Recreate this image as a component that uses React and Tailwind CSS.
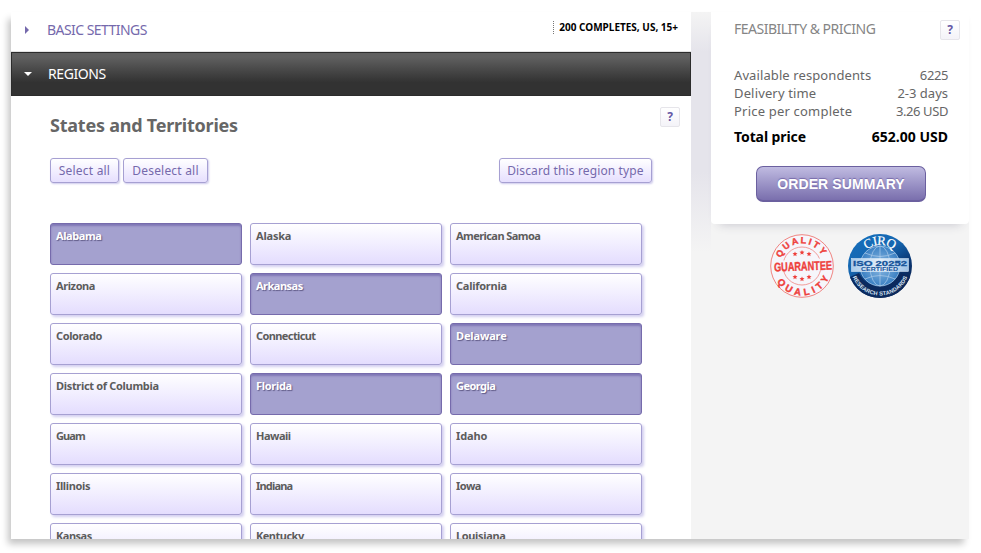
const STATES = [
  ["Alabama", true, "tracking-[-0.4px]"], ["Alaska", false, "tracking-[-0.2px]"], ["American Samoa", false, "tracking-[-0.57px]"],
  ["Arizona", false, "tracking-[-0.4px]"], ["Arkansas", true, "tracking-[-0.5px]"], ["California", false, "tracking-[-0.25px]"],
  ["Colorado", false, "tracking-[-0.4px]"], ["Connecticut", false, "tracking-[-0.6px]"], ["Delaware", true, "tracking-[-0.15px]"],
  ["District of Columbia", false, "tracking-[-0.32px]"], ["Florida", true, "tracking-[-0.3px]"], ["Georgia", true, "tracking-[-0.55px]"],
  ["Guam", false, "tracking-[-0.9px]"], ["Hawaii", false, "tracking-[-0.5px]"], ["Idaho", false, "tracking-[-0.1px]"],
  ["Illinois", false, "tracking-[-0.35px]"], ["Indiana", false, "tracking-[-0.8px]"], ["Iowa", false, "tracking-[-0.5px]"],
  ["Kansas", false, "tracking-[-0.5px]"], ["Kentucky", false, "tracking-[-0.5px]"], ["Louisiana", false, "tracking-[-0.35px]"],
];

function StateTile({ name, selected, tracking }) {
  const look = selected
    ? "border-[#766bac] bg-[#a4a1cf] text-white shadow-[inset_0_2px_2px_#8078b6] [text-shadow:1px_1px_1px_#5f5a86]"
    : "border-[#a6a0d2] bg-gradient-to-b from-white to-[#e4ddfe] text-[#5c5c5c] shadow-[2px_2px_3px_#d2cef0]";
  return (
    <button className={`flex h-[42px] w-[192px] items-start rounded-[3px] border pl-[5px] pt-[4px] text-[11px] font-bold leading-[15px] ${tracking} ${look}`}>
      {name}
    </button>
  );
}

function SmallButton({ children, className }) {
  return (
    <button className={`flex h-[25px] items-center justify-center whitespace-nowrap rounded-[3px] border border-[#a6a0d2] bg-gradient-to-b from-white to-[#e6dffe] text-[12px] leading-[16px] text-[#7569ac] shadow-[1px_1px_2px_#cdc9ec] ${className}`}>
      {children}
    </button>
  );
}

function Help() {
  return (
    <button className="flex h-5 w-5 items-center justify-center rounded-[2px] border border-[#e6e5ea] bg-gradient-to-b from-white to-[#f4f3f8] text-[12px] font-bold leading-none text-[#6558a5]">?</button>
  );
}

function PriceRow({ label, value, labelClass, valueClass }) {
  return (
    <div className="flex h-[18px] items-center justify-between whitespace-nowrap">
      <span className={labelClass}>{label}</span>
      <span className={valueClass}>{value}</span>
    </div>
  );
}

const STARS = [[25, 20], [32, 18.5], [39, 20], [25, 43], [32, 45], [39, 43]];

function QualitySeal() {
  return (
    <svg width="64" height="64" viewBox="0 0 64 64" fontFamily="Liberation Sans, sans-serif" fontWeight="bold" fill="#ee3f3b">
      <defs>
        <path id="qTop" d="M9.500 32a22.500 22.500 0 0 1 45 0" />
        <path id="qBottom" d="M2.500 32a29.500 29.500 0 0 0 59 0" />
      </defs>
      <circle cx="32" cy="32" r="31.3" fill="#f6f6fb" stroke="#f08581" strokeWidth="1" />
      <circle cx="32" cy="32" r="19" fill="none" stroke="#f08581" strokeWidth=".8" />
      <g transform="rotate(-4 32 32)" stroke="#ee3f3b" strokeWidth=".4">
        <text fontSize="9" textAnchor="middle"><textPath href="#qTop" startOffset="50%" textLength="51">QUALITY</textPath></text>
        <text fontSize="9.500" textAnchor="middle"><textPath href="#qBottom" startOffset="50%" textLength="64">QUALITY</textPath></text>
      </g>
      <path d="M3 27l58-3v12l-58 2z" fill="#f6f6fb" />
      <text x="4" y="36.500" fontSize="12.500" textLength="58" lengthAdjust="spacingAndGlyphs" transform="rotate(-2 32 32)" stroke="#ee3f3b" strokeWidth=".4">GUARANTEE</text>
      {STARS.map(([x, y]) => (
        <path key={`${x}-${y}`} transform={`translate(${x} ${y})`} d="M0-2.600L.7-.9 2.500-.8 1.100.4 1.600 2.200 0 1.200-1.600 2.200-1.100.4-2.500-.8-.7-.9z" />
      ))}
    </svg>
  );
}

function IsoSeal() {
  return (
    <svg width="66" height="66" viewBox="0 0 66 66" fontFamily="Liberation Sans, sans-serif" fontWeight="bold">
      <defs>
        <linearGradient id="blue" x1="0" y1="0" x2=".6" y2="1">
          <stop offset="0" stopColor="#1670bd" /><stop offset=".45" stopColor="#1566b0" /><stop offset=".7" stopColor="#0b3a78" /><stop offset="1" stopColor="#0a2350" />
        </linearGradient>
        <radialGradient id="globe"><stop offset="0" stopColor="#8fbbe3" /><stop offset="1" stopColor="#3a80c3" /></radialGradient>
        <linearGradient id="band" x1="0" x2="1">
          <stop offset="0" stopColor="#a9cbea" /><stop offset=".5" stopColor="#e3eef9" /><stop offset="1" stopColor="#9fc3e6" />
        </linearGradient>
        <path id="isoTop" d="M12 33a21 21 0 0 1 42 0" />
        <path id="isoBottom" d="M3.500 33a29.500 29.500 0 0 0 59 0" />
      </defs>
      <circle cx="33" cy="33" r="32" fill="url(#blue)" />
      <path d="M3 44a32 32 0 0 0 60 0L54 40a23 23 0 0 1-42 0z" fill="#0b2a5e" />
      <circle cx="33" cy="33" r="20" fill="url(#globe)" />
      <g fill="none" stroke="#b0cfeb" strokeWidth=".7">
        <circle cx="33" cy="33" r="20" /><ellipse cx="33" cy="33" rx="10" ry="20" />
        <path d="M33 13v40M18 20q15 7 30 0M18 46q15-7 30 0" />
      </g>
      <rect x="4.500" y="25.500" width="57" height="13" fill="url(#band)" stroke="#e6f1fb" strokeWidth=".5" />
      <text x="6" y="33" fontSize="7.800" fill="#14539a" stroke="#14539a" strokeWidth=".3" textLength="54" lengthAdjust="spacingAndGlyphs">ISO 20252</text>
      <text x="14" y="37.700" fontSize="4.600" fill="#14539a" textLength="37" lengthAdjust="spacingAndGlyphs">CERTIFIED</text>
      <text fontFamily="Liberation Serif, serif" fontSize="13" fontWeight="normal" fill="white" stroke="white" strokeWidth=".2" textAnchor="middle"><textPath href="#isoTop" startOffset="50%" textLength="29">CIRQ</textPath></text>
      <text fontSize="5.600" fill="#dce8f5" textAnchor="middle"><textPath href="#isoBottom" startOffset="50%" textLength="70">RESEARCH STANDARDS</textPath></text>
    </svg>
  );
}

export default function App() {
  return (
    <div className="h-[553px] w-[981px] overflow-hidden bg-white pl-[11px] pt-3 font-['Noto_Sans',sans-serif]">
      <div className="h-[527px] w-[958px] shadow-[-4px_6px_7px_-1px_#c4c4c4]">
        <div className="flex h-full overflow-hidden bg-[#f4f4f4]">
          <main className="relative z-10 h-full w-[680px] shrink-0 bg-white">
            <div className="flex h-[40px] items-start justify-between border-b border-[#e2e2e2]">
              <div className="flex items-center pl-[14px] pt-[8px]">
                <svg width="4" height="8" viewBox="0 0 4 8" fill="#7569ac"><path d="M0 0l4 4-4 4z" /></svg>
                <span className="pl-[18px] text-[14px] leading-[20px] tracking-[-0.55px] text-[#7569ac]">BASIC SETTINGS</span>
              </div>
              <div className="mr-[13px] mt-[9px] h-[13px] border-l border-dotted border-[#777] pl-[5px] text-[10px] font-bold leading-[13px] text-black">200 COMPLETES, US, 15+</div>
            </div>
            <div className="flex h-[44px] items-center border border-[#2c2c2c] bg-gradient-to-b from-[#606060] from-10% to-[#323232] to-70% pl-[12px]">
              <svg width="8" height="4" viewBox="0 0 8 4" fill="white"><path d="M0 0h8L4 4z" /></svg>
              <span className="pb-[2px] pl-[16px] text-[14px] tracking-[-0.4px] text-white">REGIONS</span>
            </div>
            <section className="pl-[39px]">
              <div className="flex h-[62px] items-start justify-between pr-[11px] pt-[11px]">
                <h2 className="pt-[6px] text-[18px] font-bold leading-[24px] tracking-[-0.23px] text-[#666]">States and Territories</h2>
                <Help />
              </div>
              <div className="flex gap-1 pr-[39px]">
                <SmallButton className="w-[69px] tracking-[0.2px]">Select all</SmallButton>
                <SmallButton className="w-[85px] tracking-[0.2px]">Deselect all</SmallButton>
                <SmallButton className="ml-auto w-[153px] tracking-[0.13px]">Discard this region type</SmallButton>
              </div>
              <div className="mt-[40px] grid w-[592px] grid-cols-3 gap-2">
                {STATES.map(([name, selected, tracking]) => (
                  <StateTile key={name} name={name} selected={selected} tracking={tracking} />
                ))}
              </div>
            </section>
          </main>
          <aside className="w-[278px] bg-[linear-gradient(to_bottom,#f4f4f4_0px,#e5e4eb_40px,#e5e4eb_160px,#f4f4f4_240px)] bg-[length:20px_240px] bg-no-repeat pl-[20px]">
            <div className="h-[212px] rounded-b-[4px] bg-white pl-[23px] shadow-[0_8px_10px_-8px_#c2c1c9]">
              <div className="flex items-start justify-between pr-[9px] pt-[8px]">
                <h3 className="-mt-px text-[14px] leading-[20px] tracking-[-0.5px] text-[#858585]">FEASIBILITY &amp; PRICING</h3>
                <Help />
              </div>
              <div className="pr-[21px] pt-[27px] text-[13px] text-[#666]">
                <PriceRow label="Available respondents" value="6225" labelClass="tracking-[0.1px]" valueClass="tracking-[-0.4px]" />
                <PriceRow label="Delivery time" value="2-3 days" labelClass="tracking-[0.15px]" valueClass="" />
                <PriceRow label="Price per complete" value="3.26 USD" labelClass="tracking-[0.2px]" valueClass="tracking-[-0.4px]" />
                <div className="mt-[6px] text-[14px] font-bold text-black"><PriceRow label="Total price" value="652.00 USD" labelClass="tracking-[-0.1px]" valueClass="" /></div>
              </div>
              <button className="ml-[22px] mt-[21px] flex h-[36px] w-[170px] items-center justify-center rounded-[7px] border border-b-2 border-[#6b609f] bg-gradient-to-b from-[#c0bbe1] to-[#7a6fad] pt-px font-['Liberation_Sans',sans-serif] text-[14px] font-bold tracking-[0.1px] text-white [text-shadow:0_-1px_1px_#776bab]">ORDER SUMMARY</button>
            </div>
            <div className="flex gap-[13px] pl-[59px] pt-[9px]">
              <div className="pt-[1px]"><QualitySeal /></div>
              <IsoSeal />
            </div>
          </aside>
        </div>
      </div>
    </div>
  );
}
